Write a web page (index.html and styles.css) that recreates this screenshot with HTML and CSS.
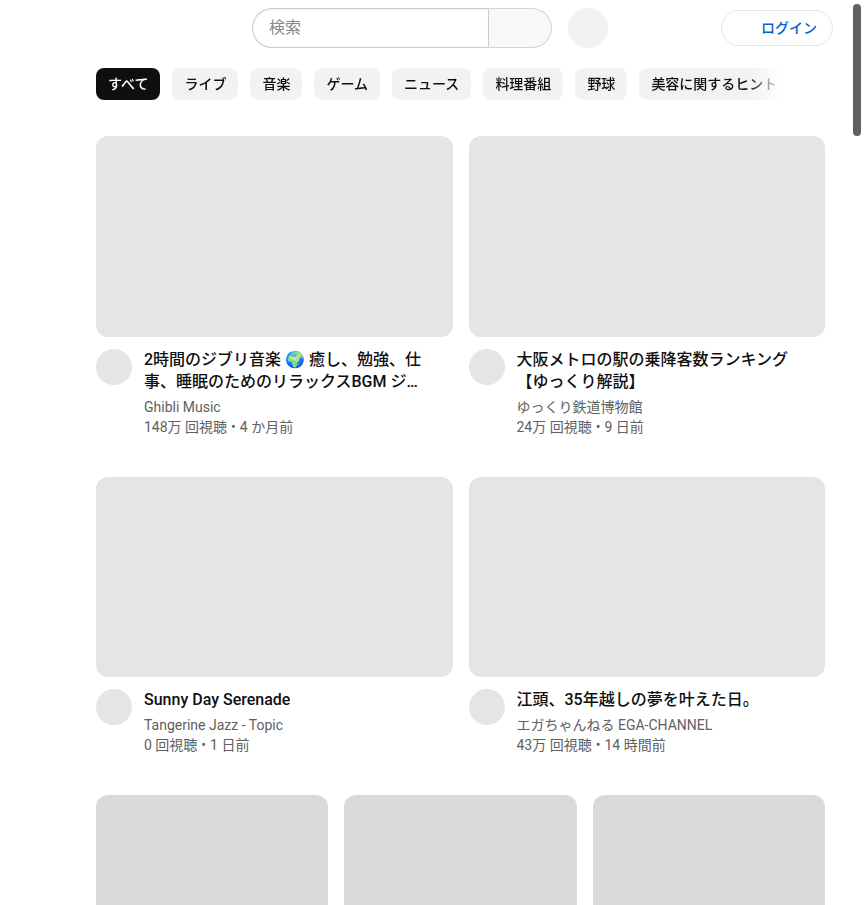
FILE: index.html
```html
<!DOCTYPE html>
<html lang="ja">
<head>
<meta charset="utf-8">
<meta name="viewport" content="width=device-width, initial-scale=1">
<title>ホーム</title>
<link rel="stylesheet" href="styles.css">
</head>
<body>
<header class="masthead">
  <div class="center">
    <form class="search" role="search">
      <input class="search-input" type="search" placeholder="検索" aria-label="検索">
      <button class="search-button" type="submit" aria-label="検索"></button>
    </form>
    <button class="voice" type="button" aria-label="音声で検索"></button>
  </div>
  <a class="login" href="#">ログイン</a>
</header>
<main class="content">
  <nav class="chips" aria-label="カテゴリ">
    <button class="chip chip-selected" type="button">すべて</button>
    <button class="chip" type="button">ライブ</button>
    <button class="chip" type="button">音楽</button>
    <button class="chip" type="button">ゲーム</button>
    <button class="chip" type="button">ニュース</button>
    <button class="chip" type="button">料理番組</button>
    <button class="chip" type="button">野球</button>
    <button class="chip" type="button">美容に関するヒント</button>
  </nav>
  <section class="videos">
    <article class="card">
      <div class="thumb"></div>
      <div class="details">
        <div class="avatar"></div>
        <div class="text">
          <h3 class="title">2時間のジブリ音楽 🌍 癒し、勉強、仕事、睡眠のためのリラックスBGM ジブリコレクション</h3>
          <p class="meta">Ghibli Music</p>
          <p class="meta">148万 回視聴<span class="dot">•</span>4 か月前</p>
        </div>
      </div>
    </article>
    <article class="card">
      <div class="thumb"></div>
      <div class="details">
        <div class="avatar"></div>
        <div class="text">
          <h3 class="title">大阪メトロの駅の乗降客数ランキング【ゆっくり解説】</h3>
          <p class="meta">ゆっくり鉄道博物館</p>
          <p class="meta">24万 回視聴<span class="dot">•</span>9 日前</p>
        </div>
      </div>
    </article>
    <article class="card">
      <div class="thumb"></div>
      <div class="details">
        <div class="avatar"></div>
        <div class="text">
          <h3 class="title">Sunny Day Serenade</h3>
          <p class="meta">Tangerine Jazz - Topic</p>
          <p class="meta">0 回視聴<span class="dot">•</span>1 日前</p>
        </div>
      </div>
    </article>
    <article class="card">
      <div class="thumb"></div>
      <div class="details">
        <div class="avatar"></div>
        <div class="text">
          <h3 class="title">江頭、35年越しの夢を叶えた日。</h3>
          <p class="meta">エガちゃんねる EGA-CHANNEL</p>
          <p class="meta">43万 回視聴<span class="dot">•</span>14 時間前</p>
        </div>
      </div>
    </article>
  </section>
  <section class="shorts">
    <div class="short"></div>
    <div class="short"></div>
    <div class="short"></div>
  </section>
</main>
<div class="scroll-thumb"></div>
</body>
</html>
```
FILE: styles.css
```css
* {
  box-sizing: border-box;
}

body {
  margin: 0;
  height: 100vh;
  overflow: hidden;
  background: #fff;
  color: #0f0f0f;
  font-family: Roboto, "Noto Sans CJK JP", sans-serif;
  font-size: 14px;
}

button,
input {
  font: inherit;
  color: inherit;
}

.masthead {
  display: grid;
  grid-template-columns: 1fr auto 1fr;
  align-items: center;
  height: 56px;
  padding: 0 32px 0 27px;
}

.center {
  display: flex;
  grid-column: 2;
  gap: 16px;
}

.search {
  display: flex;
  width: 300px;
  height: 40px;
}

.search-input {
  flex: 1;
  min-width: 0;
  padding: 0 16px 2px;
  border: 1px solid #ccc;
  border-right: 0;
  border-radius: 20px 0 0 20px;
  background: #fff;
  box-shadow: inset 0 1px 2px #eee;
  font-size: 16px;
  appearance: none;
}

.search-input::placeholder {
  color: #888;
}

.search-button {
  width: 64px;
  padding: 0;
  border: 1px solid #d3d3d3;
  border-left-color: #ccc;
  border-radius: 0 20px 20px 0;
  background: #f8f8f8;
}

.voice {
  width: 40px;
  height: 40px;
  padding: 0;
  border: 0;
  border-radius: 50%;
  background: #f2f2f2;
}

.login {
  grid-column: 3;
  justify-self: end;
  padding: 0 15px 0 39px;
  border: 1px solid #e5e5e5;
  border-radius: 18px;
  color: #065fd4;
  font-weight: 500;
  line-height: 34px;
  text-decoration: none;
}

.content {
  padding: 0 40px 0 96px;
}

.chips {
  display: flex;
  gap: 12px;
  margin-right: 44px;
  padding: 12px 0;
  overflow: hidden;
  -webkit-mask-image: linear-gradient(to left, transparent, #000 32px);
  mask-image: linear-gradient(to left, transparent, #000 32px);
}

.chip {
  flex: none;
  height: 32px;
  padding: 0 12px;
  border: 0;
  border-radius: 8px;
  background: #f2f2f2;
  font-weight: 500;
  line-height: 20px;
  white-space: nowrap;
}

.chip-selected {
  background: #0f0f0f;
  color: #fff;
}

.videos {
  display: grid;
  grid-template-columns: repeat(2, minmax(0, 1fr));
  gap: 40px 16px;
  margin-top: 24px;
}

.thumb {
  aspect-ratio: 16 / 9;
  border-radius: 12px;
  background: #e5e5e5;
}

.details {
  display: flex;
  gap: 12px;
  margin-top: 12px;
  padding-right: 24px;
}

.avatar {
  flex: none;
  width: 36px;
  height: 36px;
  border-radius: 50%;
  background: #e5e5e5;
}

.text {
  min-width: 0;
}

.title {
  display: -webkit-box;
  margin: 0 0 4px;
  overflow: hidden;
  font-size: 16px;
  font-weight: 500;
  line-height: 22px;
  -webkit-box-orient: vertical;
  -webkit-line-clamp: 2;
}

.meta {
  margin: 0;
  color: #606060;
  line-height: 20px;
}

.dot {
  margin: 0 4px;
}

.shorts {
  display: grid;
  grid-template-columns: repeat(3, minmax(0, 1fr));
  gap: 16px;
  margin-top: 40px;
}

.short {
  aspect-ratio: 9 / 16;
  border-radius: 12px;
  background: #d9d9d9;
}

.scroll-thumb {
  position: fixed;
  top: 4px;
  right: 4px;
  width: 8px;
  height: 132px;
  border-radius: 4px;
  background: #606060;
}
```
